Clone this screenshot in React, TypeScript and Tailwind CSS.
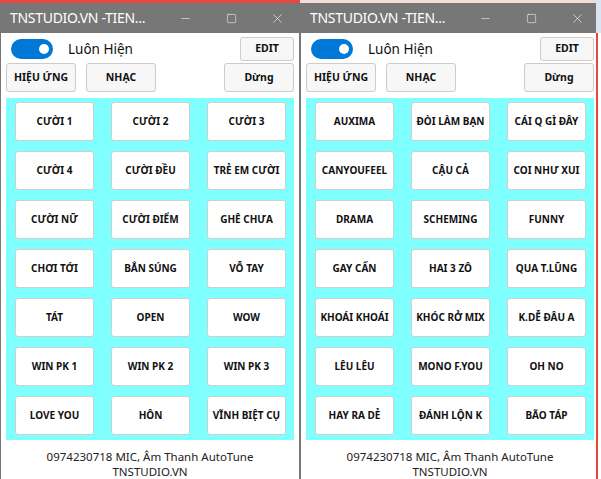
import { Minus, Square, X } from 'lucide-react'

const leftSounds = [
  'CƯỜI 1', 'CƯỜI 2', 'CƯỜI 3',
  'CƯỜI 4', 'CƯỜI ĐỀU', 'TRẺ EM CƯỜI',
  'CƯỜI NỮ', 'CƯỜI ĐIỂM', 'GHÊ CHƯA',
  'CHƠI TỚI', 'BẮN SÚNG', 'VỖ TAY',
  'TÁT', 'OPEN', 'WOW',
  'WIN PK 1', 'WIN PK 2', 'WIN PK 3',
  'LOVE YOU', 'HÔN', 'VĨNH BIỆT CỤ',
]

const rightSounds = [
  'AUXIMA', 'ĐÒI LÀM BẠN', 'CÁI Q GÌ ĐÂY',
  'CANYOUFEEL', 'CẬU CẢ', 'COI NHƯ XUI',
  'DRAMA', 'SCHEMING', 'FUNNY',
  'GAY CẤN', 'HAI 3 ZÔ', 'QUA T.LŨNG',
  'KHOÁI KHOÁI', 'KHÓC RỞ MIX', 'K.DỄ ĐÂU A',
  'LÊU LÊU', 'MONO F.YOU', 'OH NO',
  'HAY RA DẺ', 'ĐÁNH LỘN K', 'BÃO TÁP',
]

function TopButton({ label, className = '' }: { label: string; className?: string }) {
  return (
    <button
      className={`flex items-center justify-center rounded-[3px] border border-[#cccccc] bg-[#f7f7f7] text-[10.5px] font-bold whitespace-nowrap text-[#111] ${className}`}
    >
      {label}
    </button>
  )
}

function SoundWindow({ sounds, strip }: { sounds: string[]; strip: string }) {
  return (
    <div className="flex w-[300px] shrink-0 flex-col">
      <div className={`h-[3px] ${strip}`} />
      {/* title bar */}
      <div className="flex h-[30px] items-center bg-[#777777] text-white">
        <span className="min-w-0 flex-1 pl-[10px] text-[14px] leading-none tracking-[-0.3px] whitespace-nowrap">TNSTUDIO.VN -TIEN...</span>
        <div className="flex h-full w-[46px] shrink-0 items-center justify-center">
          <Minus size={13} strokeWidth={1} />
        </div>
        <div className="flex h-full w-[46px] shrink-0 items-center justify-center">
          <Square size={11} strokeWidth={1.2} />
        </div>
        <div className="flex h-full w-[46px] shrink-0 items-center justify-center">
          <X size={15} strokeWidth={1} />
        </div>
      </div>

      <div className="flex flex-1 flex-col border-x border-[#777777] bg-white px-[5px]">
        {/* row 1 */}
        <div className="mt-[4px] flex h-[24px] items-center">
          <div className="ml-[5px] flex h-[20px] w-[42px] items-center justify-end rounded-full bg-[#0078d7] pr-[4px]">
            <div className="h-[10px] w-[10px] rounded-full bg-white" />
          </div>
          <span className="ml-[15px] text-[13.5px] text-[#111]">Luôn Hiện</span>
          <TopButton label="EDIT" className="ml-auto h-[24px] w-[54px]" />
        </div>

        {/* row 2 */}
        <div className="mt-[2px] flex h-[29px] items-center">
          <TopButton label="HIỆU ỨNG" className="h-[29px] w-[70px]" />
          <TopButton label="NHẠC" className="ml-[10px] h-[29px] w-[70px]" />
          <TopButton label="Dừng" className="ml-auto h-[29px] w-[70px]" />
        </div>

        {/* sound grid */}
        <div className="mt-[6px] grid grid-cols-3 gap-x-[17px] gap-y-[10px] bg-[#80ffff] pb-[5px] pl-[9px] pr-[8px] pt-[4px]">
          {sounds.map((s) => (
            <button
              key={s}
              className="flex h-[39px] items-center justify-center rounded-[3px] border border-[#cfcfcf] bg-white text-[10px] font-bold whitespace-nowrap text-[#111]"
            >
              {s}
            </button>
          ))}
        </div>

        {/* footer */}
        <div className="flex flex-1 flex-col items-center pt-[9px] text-[11.5px] leading-[15px] text-[#222]">
          <span>0974230718 MIC, Âm Thanh AutoTune</span>
          <span>TNSTUDIO.VN</span>
        </div>
      </div>
    </div>
  )
}

export default function App() {
  return (
    <div className="flex h-[479px] w-[601px] overflow-hidden bg-white font-['Noto_Sans',sans-serif]">
      <SoundWindow sounds={leftSounds} strip="bg-[#e8463f]" />
      <div className="w-[296px] shrink-0 overflow-hidden">
        <SoundWindow sounds={rightSounds} strip="bg-[#f4dcd8]" />
      </div>
      <div className="flex w-[5px] shrink-0 flex-col">
        <div className="h-[33px] bg-[#d9e6f2]" />
        <div className="flex flex-1">
          <div className="w-[2px] bg-[#e8463f]" />
          <div className="flex-1 bg-white" />
        </div>
      </div>
    </div>
  )
}
